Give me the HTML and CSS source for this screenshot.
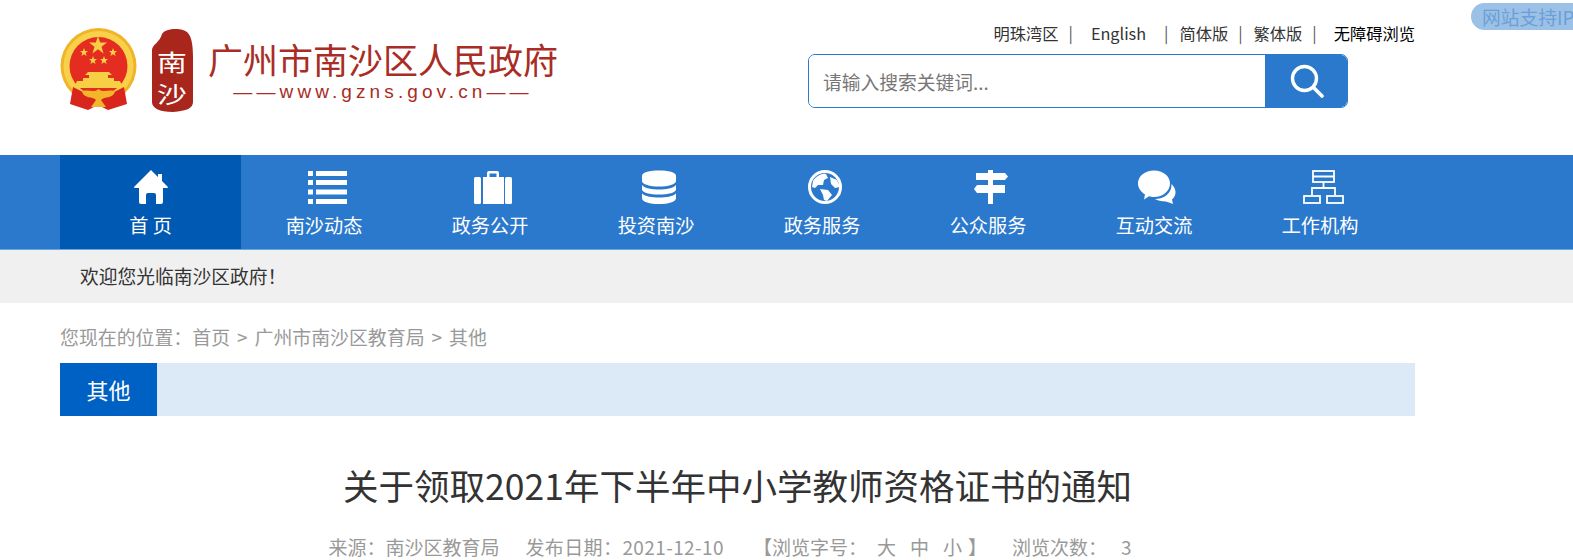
FILE: index.html
```html
<!DOCTYPE html>
<html lang="zh-CN">
<head>
    <meta charset="UTF-8">
    <meta name="viewport" content="width=device-width, initial-scale=1.0">
    <title>关于领取2021年下半年中小学教师资格证书的通知</title>
    <link rel="stylesheet" href="styles.css">
</head>
<body>
    <div class="ipv6-badge">网站支持IPv6</div>

    <header class="header wrap">
        <div class="logo">
            <svg class="emblem" viewBox="0 0 80 86">
                <circle cx="38.500" cy="38" r="38" fill="#f0b429"/>
                <circle cx="38.500" cy="38" r="35" fill="#f9d04a"/>
                <circle cx="38.500" cy="38" r="29" fill="#e52c20"/>
                <polygon points="38,8 40.200,14.600 47,14.600 41.500,18.700 43.600,25.400 38,21.300 32.400,25.400 34.500,18.700 29,14.600 35.800,14.600" fill="#f7cf45"/>
                <polygon points="24,20 25.100,23 28,23 25.700,24.900 26.600,28 24,26.200 21.400,28 22.300,24.900 20,23 22.900,23" fill="#f7cf45"/>
                <polygon points="53,20 54.100,23 57,23 54.700,24.900 55.600,28 53,26.200 50.400,28 51.300,24.900 49,23 51.900,23" fill="#f7cf45"/>
                <polygon points="33,28 34.100,31 37,31 34.700,32.900 35.600,36 33,34.200 30.400,36 31.300,32.900 29,31 31.900,31" fill="#f7cf45"/>
                <polygon points="44,28 45.100,31 48,31 45.700,32.900 46.600,36 44,34.200 41.400,36 42.300,32.900 40,31 42.900,31" fill="#f7cf45"/>
                <path d="M28 44 H49 L52 47 H48 V50 H54 V53 H60 L63 60 H14 L17 53 H23 V50 H29 V47 H25 Z" fill="#f7cf45"/>
                <path d="M13 59 L23 64 H54 L64 59 L67 76 L48 82 L38 77 L28 82 L10 76 Z" fill="#d8261c"/>
                <path d="M22 64 C27 60 33 66 38.500 61 C44 66 50 60 55 64 C52 71 45 68 41 72 L46 79 H31 L36 72 C32 68 25 71 22 64 Z" fill="#f3b52a"/>
            </svg>
            <svg class="seal" viewBox="0 0 42 84">
                <path d="M11 6 C14 0 32 -1 37 5 C41 10 42 18 42 30 L42 74 C42 80 36 83 22 84 C8 84 1 80 1 74 L1 22 C1 17 9 14 11 6 Z" fill="#a8261c"/>
                <text transform="translate(21 43) scale(1.3 1)" class="seal-text">南</text>
                <text transform="translate(21 75) scale(1.3 1)" class="seal-text">沙</text>
            </svg>
            <div class="logo-text">
                <div class="logo-name">广州市南沙区人民政府</div>
                <div class="logo-url">——www.gzns.gov.cn——</div>
            </div>
        </div>

        <div class="header-right">
            <div class="top-links">
                <a href="#">明珠湾区</a><i>|</i>
                <a href="#" class="link-en">English</a><i>|</i>
                <a href="#">简体版</a><i>|</i>
                <a href="#">繁体版</a><i>|</i>
                <a href="#" class="link-access">无障碍浏览</a>
            </div>
            <form class="search">
                <input type="text" placeholder="请输入搜索关键词...">
                <button type="button">
                    <svg viewBox="0 0 34 34" width="34" height="34">
                        <circle cx="14.500" cy="14.500" r="12" fill="none" stroke="#fff" stroke-width="3.400"/>
                        <path d="M23.500 23.500 L32 32" stroke="#fff" stroke-width="3.600" stroke-linecap="round"/>
                    </svg>
                </button>
            </form>
        </div>
    </header>

    <nav class="nav">
        <div class="wrap nav-list">
            <a href="#" class="nav-item active">
                <svg viewBox="0 0 48 34"><path d="M24 0 L31 7 V4 H35 V11 L41 17 Q41 18 40 18 H36 V32 Q36 34 34 34 H29 V25 Q29 23 27 23 H21 Q19 23 19 25 V34 H14 Q12 34 12 32 V18 H8 Q7 18 7 17 Z"/></svg>
                <span>首 页</span>
            </a>
            <a href="#" class="nav-item">
                <svg viewBox="0 0 48 34">
                    <rect x="8" y="1" width="5" height="5"/><rect x="16" y="1" width="31" height="5"/>
                    <rect x="8" y="10" width="5" height="5"/><rect x="16" y="10" width="31" height="5"/>
                    <rect x="8" y="19.500" width="5" height="5"/><rect x="16" y="19.500" width="31" height="5"/>
                    <rect x="8" y="29" width="5" height="5"/><rect x="16" y="29" width="31" height="5"/>
                </svg>
                <span>南沙动态</span>
            </a>
            <a href="#" class="nav-item">
                <svg viewBox="0 0 48 34">
                    <rect x="8" y="7" width="7" height="27" rx="1.500"/>
                    <rect x="39" y="7" width="7" height="27" rx="1.500"/>
                    <path d="M17 7 H21 V3 Q21 1 23 1 H31 Q33 1 33 3 V7 H38 V34 H17 Z M23.500 7 H30.500 V3.500 H23.500 Z" fill-rule="evenodd"/>
                </svg>
                <span>政务公开</span>
            </a>
            <a href="#" class="nav-item">
                <svg viewBox="0 0 48 34">
                    <path d="M10 6 C10 2 18 0.500 27 0.500 C36 0.500 44 2 44 6 V11 C44 14.500 36 16.500 27 16.500 C18 16.500 10 14.500 10 11 Z"/>
                    <path d="M10 15 C13 18.500 20 19.500 27 19.500 C34 19.500 41 18.500 44 15 V19.500 C44 22.500 36 24.500 27 24.500 C18 24.500 10 22.500 10 19.500 Z"/>
                    <path d="M10 23.500 C13 26.500 20 27.500 27 27.500 C34 27.500 41 26.500 44 23.500 V28 C44 32 36 34 27 34 C18 34 10 32 10 28 Z"/>
                </svg>
                <span>投资南沙</span>
            </a>
            <a href="#" class="nav-item">
                <svg viewBox="0 0 48 34">
                    <circle cx="27" cy="17" r="15.500" fill="none" stroke="#fff" stroke-width="3"/>
                    <path d="M15 11 C18 6 24 3 28 4 L30 8 L26 10 L25 15 L20 15 L17 18 L14 17 Z"/>
                    <path d="M32 7 L39 10 L42 17 L37 18 L33 14 Z"/>
                    <path d="M22 19 L30 20 L34 25 L29 31 L26 30 L25 25 Z"/>
                </svg>
                <span>政务服务</span>
            </a>
            <a href="#" class="nav-item">
                <svg viewBox="0 0 48 34">
                    <path d="M24 0 H29 V3 H41 L44 6.500 L41 10 H29 V15 H41 V23 H29 V34 H24 V23 H13 L10 19 L13 15 H24 V10 H12 V3 H24 Z"/>
                </svg>
                <span>公众服务</span>
            </a>
            <a href="#" class="nav-item">
                <svg viewBox="0 0 48 34">
                    <path d="M24 0.500 C33 0.500 40 6 40 13.500 C40 21 33 27 24 27 C22 27 20.500 26.800 19 26.300 L14 29.500 L15 24.500 C11 22 8 18 8 13.500 C8 6 15 0.500 24 0.500 Z"/>
                    <path d="M41.500 14 C46 18 47.500 25 42 29.500 L43 34 L36 31.500 C31 31.500 27.500 30.500 25 29 C34 29 42 23 41.500 14 Z"/>
                </svg>
                <span>互动交流</span>
            </a>
            <a href="#" class="nav-item">
                <svg viewBox="0 0 48 34" class="icon-org">
                    <rect x="17" y="1" width="21" height="11"/>
                    <path d="M17 6.500 H38 M27.500 12 V18 M16 25 V18 H39 V25"/>
                    <rect x="8" y="26" width="16" height="7"/>
                    <rect x="31" y="26" width="16" height="7"/>
                </svg>
                <span>工作机构</span>
            </a>
        </div>
    </nav>

    <div class="welcome">
        <div class="wrap welcome-text">欢迎您光临南沙区政府！</div>
    </div>

    <main class="wrap">
        <div class="crumb">您现在的位置：<a href="#">首页</a><em>&gt;</em><a href="#">广州市南沙区教育局</a><em>&gt;</em><a href="#">其他</a></div>
        <div class="section-bar"><span>其他</span></div>
        <h1 class="article-title">关于领取2021年下半年中小学教师资格证书的通知</h1>
        <div class="article-meta">
            <span class="meta-source">来源：南沙区教育局</span>
            <span class="meta-date">发布日期：2021-12-10</span>
            <span class="meta-size">【浏览字号：<a href="#">大</a><a href="#">中</a><a href="#">小</a>】</span>
            <span>浏览次数：<b>3</b></span>
        </div>
    </main>
</body>
</html>
```

FILE: styles.css
```css
* { box-sizing: border-box; }
html, body { height: 100%; }
body { margin: 0; overflow: hidden; background-color: #fff; color: #333; font-family: "Noto Sans CJK SC", "Noto Sans", sans-serif; font-size: 18.75px; position: relative; }
a { color: inherit; text-decoration: none; }
.wrap { width: 1355px; margin-left: 60px; }

.ipv6-badge { position: absolute; top: 3px; left: 1471px; width: 140px; height: 27px; padding-left: 11px; border-radius: 14px; background-color: #9cc1e6; color: #6c9fd8; font-size: 18.75px; line-height: 27px; white-space: nowrap; }

.header { display: flex; justify-content: space-between; height: 155px; }
.logo { display: flex; align-items: flex-start; padding-top: 28px; }
.emblem { width: 80px; height: 86px; }
.seal { width: 42px; height: 84px; margin-left: 11px; }
.seal-text { fill: #fff; font-size: 23px; text-anchor: middle; }
.logo-text { margin-left: 15px; padding-top: 9px; color: #a92c25; text-align: center; }
.logo-name { font-size: 35px; line-height: 44px; white-space: nowrap; }
.logo-url { font-family: "Liberation Sans", sans-serif; font-size: 19px; line-height: 22px; letter-spacing: 4.1px; white-space: nowrap; }

.header-right { width: 607px; padding-top: 23px; }
.top-links { display: flex; justify-content: flex-end; height: 31px; color: #333; font-size: 16.25px; line-height: 20px; white-space: nowrap; }
.top-links i { margin: 0 11px 0 10px; font-style: normal; color: #555; }
.link-en { margin: 0 8px 0 7px; }
.link-access { margin-left: 6px; color: #000; }
.search { display: flex; width: 540px; height: 54px; border: 1px solid #2b79cd; border-radius: 7px; overflow: hidden; }
.search input { flex: 1; min-width: 0; padding: 0 14px; border: none; outline: none; font: inherit; color: #333; }
.search input::placeholder { color: #777; opacity: 1; }
.search button { display: flex; align-items: center; justify-content: center; width: 82px; padding: 0 0 0 2px; border: none; background-color: #2b79cd; }

.nav { height: 95px; background-color: #2b79cd; border-bottom: 1px solid #6ea4e0; }
.nav-list { display: flex; }
.nav-item { display: flex; flex-direction: column; align-items: center; width: 166px; height: 94px; padding-top: 15px; color: #fff; font-size: 19.2px; }
.nav-item.active { width: 181px; background-color: #0059b3; }
.nav-item svg { width: 48px; height: 34px; fill: #fff; }
.nav-item span { margin-top: 6px; line-height: 30px; }
.nav-item .icon-org { fill: none; stroke: #fff; stroke-width: 1.8; }

.welcome { height: 53px; background-color: #f0f0f0; }
.welcome-text { padding-left: 20px; line-height: 52px; }

.crumb { height: 60px; color: #999; font-size: 18.9px; line-height: 67px; }
.crumb em { margin: 0 7px; font-style: normal; }
.section-bar { height: 53px; background-color: #dce9f7; }
.section-bar span { display: block; width: 97px; height: 53px; background-color: #0061c4; color: #fff; font-size: 22px; line-height: 53px; text-align: center; }

.article-title { margin: 44px 0 25px; color: #333; font-size: 35.5px; font-weight: 400; line-height: 50px; text-align: center; }
.article-meta { display: flex; justify-content: center; padding-right: 15px; color: #999; font-size: 19px; line-height: 24px; white-space: nowrap; }
.meta-source { margin-right: 26px; }
.meta-date { margin-right: 29px; letter-spacing: 0.4px; }
.meta-size { margin-right: 25px; }
.meta-size a { margin-right: 14px; }
.meta-size a:first-of-type { margin-left: 10px; }
.meta-size a:last-of-type { margin-right: 6px; }
.article-meta b { margin-left: 14px; font-weight: 400; }
```
